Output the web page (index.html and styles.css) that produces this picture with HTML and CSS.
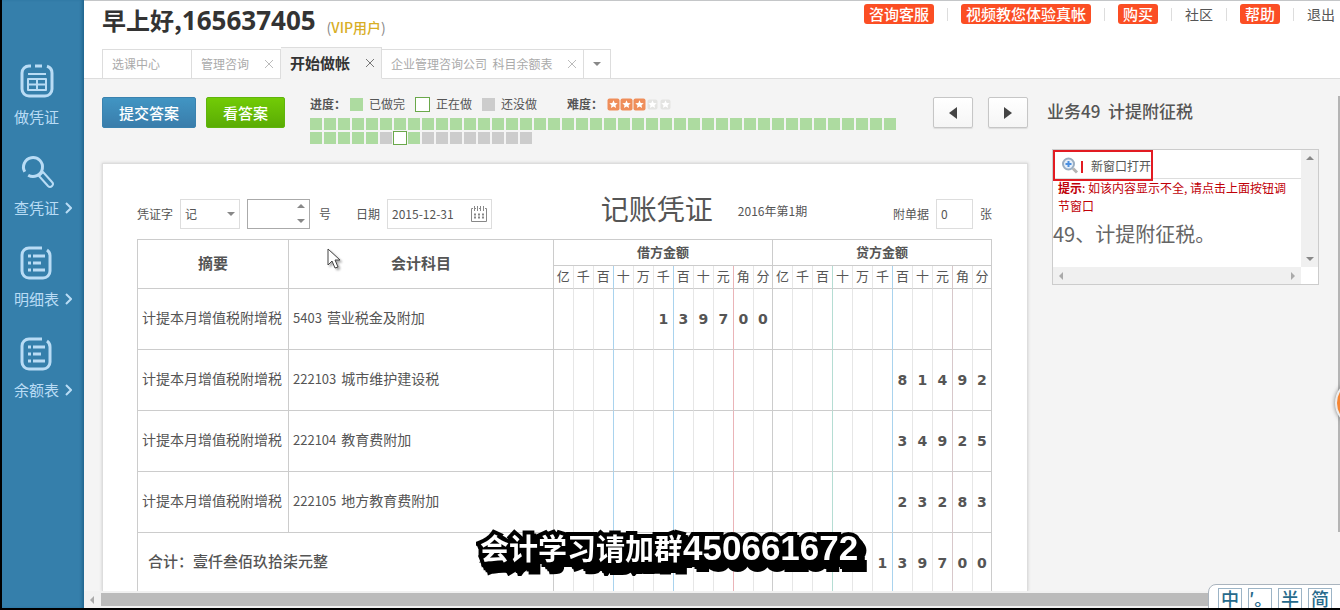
FILE: index.html
```html
<!DOCTYPE html>
<html lang="zh-CN">
<head>
<meta charset="utf-8">
<title>开始做帐</title>
<link rel="stylesheet" href="styles.css">
</head>
<body>
<div class="screen">
  <nav class="sidebar">
    <a class="side-item" href="#">
      <svg class="side-icon" viewBox="0 0 34 34"><path d="M11 2H9a7 7 0 0 0-7 7v16a7 7 0 0 0 7 7h16a7 7 0 0 0 7-7V9a7 7 0 0 0-5-6.700M15 2h7"/><path class="thin" d="M8 10h18M8 15h18v11H8zM8 20.500h18M17 15v11"/></svg>
      <span class="side-label">做凭证</span>
    </a>
    <a class="side-item" href="#">
      <svg class="side-icon" viewBox="0 0 34 34"><path d="M4.800 16.800A9.500 9.500 0 1 1 8.200 20.200"/><path class="thin" d="M19 21l4-4 9 10a2.800 2.800 0 0 1-4 4z"/></svg>
      <span class="side-label">查凭证<svg class="chevron" viewBox="0 0 7 12"><path d="M1 1l5 5-5 5"/></svg></span>
    </a>
    <a class="side-item" href="#">
      <svg class="side-icon" viewBox="0 0 34 34"><path d="M22 2H9a7 7 0 0 0-7 7v16a7 7 0 0 0 7 7h14a7 7 0 0 0 7-7V10a7 7 0 0 0-3-6"/><path d="M8 10h3M8 17h3M8 24h3M13 10h12M13 17h8M13 24h12"/></svg>
      <span class="side-label">明细表<svg class="chevron" viewBox="0 0 7 12"><path d="M1 1l5 5-5 5"/></svg></span>
    </a>
    <a class="side-item" href="#">
      <svg class="side-icon" viewBox="0 0 34 34"><path d="M22 2H9a7 7 0 0 0-7 7v16a7 7 0 0 0 7 7h14a7 7 0 0 0 7-7V10a7 7 0 0 0-3-6"/><path d="M8 10h3M8 17h3M8 24h3M13 10h12M13 17h8M13 24h12"/></svg>
      <span class="side-label">余额表<svg class="chevron" viewBox="0 0 7 12"><path d="M1 1l5 5-5 5"/></svg></span>
    </a>
  </nav>

  <div class="main">
    <header class="header">
      <div class="header-top">
        <h1 class="greeting">早上好,<span class="greeting-id">165637405</span></h1>
        <span class="vip">(<b>VIP用户</b>)</span>
        <div class="top-links">
          <a class="pill" href="#">咨询客服</a><i class="sep"></i>
          <a class="pill" href="#">视频教您体验真帐</a><i class="sep"></i>
          <a class="pill" href="#">购买</a><i class="sep"></i>
          <a class="plain" href="#">社区</a><i class="sep"></i>
          <a class="pill" href="#">帮助</a><i class="sep"></i>
          <a class="plain" href="#">退出</a>
        </div>
      </div>
      <div class="tabs">
        <a class="tab tab-first" href="#">选课中心</a>
        <a class="tab" href="#">管理咨询<svg class="close" viewBox="0 0 8 8"><path d="M0 0l8 8M8 0L0 8"/></svg></a>
        <a class="tab tab-active" href="#">开始做帐<svg class="close" viewBox="0 0 8 8"><path d="M0 0l8 8M8 0L0 8"/></svg></a>
        <a class="tab" href="#">企业管理咨询公司&nbsp; 科目余额表<svg class="close" viewBox="0 0 8 8"><path d="M0 0l8 8M8 0L0 8"/></svg></a>
        <button class="tab tab-more" aria-label="更多"><i class="tri tri-down"></i></button>
      </div>
    </header>

    <div class="workspace">
      <section class="work">
        <div class="toolbar">
          <button class="btn btn-blue">提交答案</button>
          <button class="btn btn-green">看答案</button>
          <div class="progress">
            <div class="legend">
              <b>进度：</b>
              <i class="sq done"></i><span class="legend-text">已做完</span>
              <i class="sq now"></i><span class="legend-text">正在做</span>
              <i class="sq todo"></i><span class="legend-text">还没做</span>
              <b class="level">难度：</b>
              <span class="stars">
                <svg class="star on" viewBox="0 0 13 13"><rect x="0.500" y="0.500" width="12" height="12" rx="2"/><path d="M6.500 2.200l1.200 2.700 3 .3-2.200 2 .6 2.900-2.600-1.500-2.600 1.500.6-2.900-2.200-2 3-.3z"/></svg>
                <svg class="star on" viewBox="0 0 13 13"><rect x="0.500" y="0.500" width="12" height="12" rx="2"/><path d="M6.500 2.200l1.200 2.700 3 .3-2.200 2 .6 2.900-2.600-1.500-2.600 1.500.6-2.900-2.200-2 3-.3z"/></svg>
                <svg class="star on" viewBox="0 0 13 13"><rect x="0.500" y="0.500" width="12" height="12" rx="2"/><path d="M6.500 2.200l1.200 2.700 3 .3-2.200 2 .6 2.900-2.600-1.500-2.600 1.500.6-2.900-2.200-2 3-.3z"/></svg>
                <svg class="star" viewBox="0 0 13 13"><rect x="1.500" y="1.500" width="10" height="10" rx="2"/><path d="M6.500 2.200l1.200 2.700 3 .3-2.200 2 .6 2.900-2.600-1.500-2.600 1.500.6-2.900-2.200-2 3-.3z"/></svg>
                <svg class="star" viewBox="0 0 13 13"><rect x="1.500" y="1.500" width="10" height="10" rx="2"/><path d="M6.500 2.200l1.200 2.700 3 .3-2.200 2 .6 2.900-2.600-1.500-2.600 1.500.6-2.900-2.200-2 3-.3z"/></svg>
              </span>
            </div>
            <div class="cells">
              <i class="done"></i><i class="done"></i><i class="done"></i><i class="done"></i><i class="done"></i><i class="done"></i><i class="done"></i><i class="done"></i><i class="done"></i><i class="done"></i><i class="done"></i><i class="done"></i><i class="done"></i><i class="done"></i><i class="done"></i><i class="done"></i><i class="done"></i><i class="done"></i><i class="done"></i><i class="done"></i><i class="done"></i><i class="done"></i><i class="done"></i><i class="done"></i><i class="done"></i><i class="done"></i><i class="done"></i><i class="done"></i><i class="done"></i><i class="done"></i><i class="done"></i><i class="done"></i><i class="done"></i><i class="done"></i><i class="done"></i><i class="done"></i><i class="done"></i><i class="done"></i><i class="done"></i><i class="done"></i><i class="done"></i><i class="done"></i>
              <i class="done"></i><i class="done"></i><i class="done"></i><i class="done"></i><i class="done"></i><i class="todo"></i><i class="now"></i><i class="done"></i><i class="todo"></i><i class="todo"></i><i class="todo"></i><i class="todo"></i><i class="todo"></i><i class="todo"></i><i class="todo"></i><i class="todo"></i>
            </div>
          </div>
          <div class="pager">
            <button class="page-btn" aria-label="上一题"><svg viewBox="0 0 8 12"><path d="M8 0v12L0 6z"/></svg></button>
            <button class="page-btn" aria-label="下一题"><svg viewBox="0 0 8 12"><path d="M0 0v12l8-6z"/></svg></button>
          </div>
        </div>

        <div class="sheet">
          <div class="form-row">
            <label for="word">凭证字</label>
            <span class="field word"><select id="word"><option>记</option></select><i class="tri tri-down"></i></span>
            <span class="field number"><input id="number" type="text"><span class="spin"><button class="tri tri-up" aria-label="增加"></button><button class="tri tri-down" aria-label="减少"></button></span></span>
            <label for="number">号</label>
            <label class="date-label" for="date">日期</label>
            <span class="field date"><input id="date" type="text" value="2015-12-31"><svg class="calendar" viewBox="0 0 16 16"><path d="M4 2.500h1M8 2.500h1M12 2.500h1M2 2.500H.5v13h15v-13H14M3.500 0v5M6.500 0v5M9.500 0v5M12.500 0v5"/><path class="dots" d="M3 8.500h10M3 11.500h10"/></svg></span>
            <div class="title-group"><h2 class="doc-title">记账凭证</h2><span class="period">2016年第1期</span></div>
            <label for="attach">附单据</label>
            <span class="field attach"><input id="attach" type="text" value="0"></span>
            <span>张</span>
          </div>

          <table class="voucher">
            <colgroup>
              <col class="c-sum"><col>
              <col class="c" span="10"><col class="c-end">
              <col class="c" span="10"><col class="c-end">
            </colgroup>
            <thead>
              <tr class="h1"><th rowspan="2" class="big">摘要</th><th rowspan="2" class="big">会计科目</th><th colspan="11">借方金额</th><th colspan="11">贷方金额</th></tr>
              <tr class="h2"><td>亿</td><td>千</td><td>百</td><td>十</td><td>万</td><td>千</td><td>百</td><td>十</td><td>元</td><td>角</td><td>分</td><td>亿</td><td>千</td><td>百</td><td>十</td><td>万</td><td>千</td><td>百</td><td>十</td><td>元</td><td>角</td><td>分</td></tr>
            </thead>
            <tbody>
              <tr><th class="text">计提本月增值税附增税</th><th class="text"><span class="code">5403</span>营业税金及附加</th><td></td><td></td><td></td><td></td><td></td><td>1</td><td>3</td><td>9</td><td>7</td><td>0</td><td>0</td><td></td><td></td><td></td><td></td><td></td><td></td><td></td><td></td><td></td><td></td><td></td></tr>
              <tr><th class="text">计提本月增值税附增税</th><th class="text"><span class="code">222103</span>城市维护建设税</th><td></td><td></td><td></td><td></td><td></td><td></td><td></td><td></td><td></td><td></td><td></td><td></td><td></td><td></td><td></td><td></td><td></td><td>8</td><td>1</td><td>4</td><td>9</td><td>2</td></tr>
              <tr><th class="text">计提本月增值税附增税</th><th class="text"><span class="code">222104</span>教育费附加</th><td></td><td></td><td></td><td></td><td></td><td></td><td></td><td></td><td></td><td></td><td></td><td></td><td></td><td></td><td></td><td></td><td></td><td>3</td><td>4</td><td>9</td><td>2</td><td>5</td></tr>
              <tr><th class="text">计提本月增值税附增税</th><th class="text"><span class="code">222105</span>地方教育费附加</th><td></td><td></td><td></td><td></td><td></td><td></td><td></td><td></td><td></td><td></td><td></td><td></td><td></td><td></td><td></td><td></td><td></td><td>2</td><td>3</td><td>2</td><td>8</td><td>3</td></tr>
              <tr><th class="total" colspan="2">合计：壹仟叁佰玖拾柒元整</th><td></td><td></td><td></td><td></td><td></td><td></td><td></td><td></td><td></td><td></td><td></td><td></td><td></td><td></td><td></td><td></td><td>1</td><td>3</td><td>9</td><td>7</td><td>0</td><td>0</td></tr>
            </tbody>
          </table>
        </div>
      </section>

      <aside class="task">
        <h3 class="task-title">业务49&nbsp; 计提附征税</h3>
        <div class="task-box">
          <div class="task-body">
            <div class="task-bar"><a class="open-link" href="#"><svg class="zoom-icon" viewBox="0 0 18 18"><circle cx="7.500" cy="7" r="5.500"/><path class="plus" d="M7.500 4v6M4.500 7h6"/><path class="handle" d="M12 11.500l4 4"/></svg><i class="mark"></i>新窗口打开</a></div>
            <p class="hint"><b>提示</b>: 如该内容显示不全, 请点击上面按钮调节窗口</p>
            <p class="question">49、计提附征税。</p>
          </div>
          <div class="bar-v"><i class="tri tri-up"></i><i class="tri tri-down"></i></div>
          <div class="bar-h"><i class="tri tri-left"></i><i class="tri tri-right"></i></div>
        </div>
      </aside>
    </div>

    <div class="page-scroll"><i class="tri tri-left"></i><div class="thumb"></div></div>
  </div>

  <i class="side-thumb"></i>
  <i class="bubble"></i>
  <svg class="cursor" viewBox="0 0 14 22"><path d="M1 1v16l4-4 3 7 3-1-3-7h5z"/></svg>
  <div class="caption">会计学习请加群<span class="caption-num">450661672</span></div>
  <div class="ime"><button>中</button><button>′。</button><button>半</button><button>简</button></div>
</div>
</body>
</html>
```
FILE: styles.css
```css
* { box-sizing: border-box; }

body {
  margin: 0;
  font: 12px/18px "Noto Sans CJK SC", sans-serif;
  color: #555;
}

h1, h2, h3, p { margin: 0; font-weight: 400; }
a { color: inherit; text-decoration: none; }
i { font-style: normal; }
button, input, select { font: inherit; color: inherit; margin: 0; padding: 0; border: 0; background: none; }
svg { display: block; flex: none; }

.screen {
  position: relative;
  display: flex;
  height: 100vh;
  overflow: hidden;
  border-left: 2px solid #000;
  border-bottom: 2px solid #000;
  background: #f4f4f4;
}

/* Triangles shared by selects, spinners and scrollbars */
.tri { display: block; width: 0; height: 0; border: 4px solid transparent; flex: none; }
.tri-down { border-top-color: #888; border-bottom: 0; }
.tri-up { border-bottom-color: #888; border-top: 0; }
.tri-left { border-right-color: #aaa; border-left: 0; }
.tri-right { border-left-color: #aaa; border-right: 0; }

/* Sidebar */
.sidebar {
  flex: none;
  width: 82px;
  padding: 64px 0 0 12px;
  display: flex;
  flex-direction: column;
  gap: 28px;
  background: #357fab;
  box-shadow: inset -3px 0 3px -1px #22668f;
}
.side-item { display: flex; flex-direction: column; gap: 9px; color: #b9dcf5; }
.side-icon { width: 34px; height: 34px; margin-left: 6px; }
.side-icon path { fill: none; stroke: #b9dcf5; stroke-width: 3; stroke-linejoin: round; }
.side-icon .thin { stroke-width: 2; }
.side-label { display: flex; align-items: center; gap: 6px; font-size: 15px; line-height: 20px; }
.chevron { width: 7px; height: 12px; }
.chevron path { fill: none; stroke: #b9dcf5; stroke-width: 2; }

/* Header */
.main { flex: 1; min-width: 0; display: flex; flex-direction: column; }
.header {
  flex: none;
  height: 79px;
  display: flex;
  flex-direction: column;
  justify-content: space-between;
  background: #fff;
  border-top: 1px solid #c4c6c8;
  border-bottom: 1px solid #ddd;
}
.header-top { display: flex; padding: 0 5px 0 18px; }
.greeting { font-size: 24px; line-height: 38px; font-weight: 700; color: #333; }
.greeting-id { font: 700 26px/38px "Open Sans", sans-serif; }
.vip { margin: 16px 0 0 11px; font-size: 14px; line-height: 20px; color: #888; }
.vip b { color: #d8ae26; font-weight: 500; }
.top-links { margin-left: auto; display: flex; align-items: center; height: 20px; margin-top: 3px; gap: 13px; font-size: 14px; }
.pill { background: #fb4e24; color: #fff; font-size: 15px; line-height: 20px; font-weight: 500; padding: 0 5px; border-radius: 3px; }
.plain { line-height: 20px; }
.sep { width: 1px; height: 13px; background: #ddd; }

.tabs { display: flex; align-items: flex-end; padding-left: 18px; margin-bottom: -1px; }
.tab {
  height: 30px;
  display: flex;
  align-items: center;
  justify-content: space-between;
  gap: 16px;
  padding: 0 7px 0 9px;
  border: 1px solid #ddd;
  border-left: 0;
  color: #aaa;
}
.tab-first { width: 90px; border-left: 1px solid #ddd; }
.tab-active { height: 32px; background: #f4f4f4; border-bottom-color: #f4f4f4; font-size: 15px; font-weight: 700; color: #333; }
.tab-more { width: 27px; justify-content: center; padding: 0; }
.close { width: 8px; height: 8px; }
.close path { stroke: #bbb; stroke-width: 1; }
.tab-active .close path { stroke: #777; }

/* Workspace */
.workspace { flex: 1; min-height: 0; display: flex; overflow: hidden; }
.work { flex: 1; min-width: 0; padding: 18px 0 0 18px; display: flex; flex-direction: column; }
.toolbar { flex: none; display: flex; align-items: flex-start; height: 66px; gap: 10px; }
.btn { flex: none; height: 31px; border-radius: 2px; color: #fff; font-size: 15px; font-weight: 500; padding: 0 16px; }
.btn-blue { background: linear-gradient(#4195c3, #3a7dab); border: 1px solid #3a82af; }
.btn-green { background: linear-gradient(#72cb06, #5aac04); border: 1px solid #5fb50c; }
.progress { flex: 1; min-width: 0; padding-left: 15px; }
.legend { display: flex; align-items: center; height: 14px; }
.legend b { width: 40px; }
.legend-text { margin: 0 10px 0 6px; }
.legend .level { margin-left: 20px; }
.sq { width: 13px; height: 13px; }
.done { background: #addba0; }
.todo { background: #ccc; }
.now { background: #fff; border: 1px solid #6aa84a; }
.sq.now { width: 15px; height: 15px; }
.stars { display: flex; }
.star { width: 13px; height: 13px; }
.star rect { fill: #e4e4e2; }
.star path { fill: #fff; }
.star.on rect { fill: #ef8e5a; }
.cells { display: grid; grid-template-columns: repeat(42, 12px); grid-auto-rows: 12px; gap: 2px; margin-top: 7px; }
.cells .now { margin: -1px; }
.pager { flex: none; display: flex; gap: 15px; }
.page-btn { width: 40px; height: 31px; display: grid; place-items: center; border: 1px solid #c6c6c6; border-radius: 2px; background: linear-gradient(#fff, #f5f5f5); box-shadow: 0 1px 1px #ddd; }
.page-btn svg { width: 8px; height: 12px; fill: #444; }

/* Voucher sheet */
.sheet { flex: 1; min-height: 0; padding: 20px 35px 0 34px; background: #fff; border: 1px solid #ddd; border-bottom: 0; box-shadow: 0 0 3px #ccc; }
.form-row { display: flex; align-items: center; height: 55px; padding-top: 4px; gap: 7px; }
.field { position: relative; display: flex; align-items: center; justify-content: space-between; height: 30px; padding: 0 4px; border: 1px solid #ddd; }
.field input, .field select { min-width: 0; width: 100%; height: 28px; outline: 0; appearance: none; }
.word { width: 60px; }
.number { width: 63px; border-color: #aaa; margin-right: 2px; }
.spin { display: flex; flex-direction: column; gap: 11px; }
.date-label { margin-left: 18px; }
.date { width: 105px; }
.calendar { width: 16px; height: 16px; }
.calendar path { fill: none; stroke: #888; }
.calendar .dots { stroke-dasharray: 2 2; stroke-width: 2; }
.title-group { margin: 0 auto; padding: 0 0 12px 23px; display: flex; align-items: center; gap: 25px; }
.doc-title { font-size: 28px; line-height: 32px; color: #555; }
.period { padding-top: 7px; }
.attach { width: 37px; }

.voucher { width: 100%; table-layout: fixed; border-collapse: separate; border-spacing: 0; border: 1px solid #ccc; border-width: 1px 0 0 1px; }
.c-sum { width: 151px; }
.c { width: 20px; }
.c-end { width: 19px; }
.voucher tr { height: 61px; }
.voucher .h1 { height: 26px; }
.voucher .h2 { height: 23px; }
.voucher th, .voucher td { padding: 0; border: 0 solid #ccc; border-width: 0 1px 1px 0; text-align: center; white-space: nowrap; }
.voucher td { border-right-color: #e6e6e6; font: 700 14px/18px "DejaVu Sans", sans-serif; }
.voucher td:nth-last-child(20), .voucher td:nth-last-child(17), .voucher td:nth-last-child(6) { border-right-color: #a9d3ee; }
.voucher td:nth-last-child(14) { border-right-color: #eab4b8; }
.voucher td:nth-last-child(9) { border-right-color: #b5ddd3; }
.voucher td:nth-last-child(3) { border-right-color: #d8c8ca; }
.voucher td:nth-last-child(12), .voucher td:last-child { border-right-color: #ccc; }
.voucher .h1 th { font-size: 13px; line-height: 18px; padding-bottom: 2px; }
.voucher .h2 td { font: 13px/18px "Noto Sans CJK SC", sans-serif; padding-bottom: 2px; }
.voucher .h1 .big { font-size: 15px; }
.voucher .text { text-align: left; font-size: 14px; font-weight: 400; padding: 0 0 4px 4px; }
.code { font-size: 13px; margin-right: 5px; }
.voucher .total { text-align: left; font-size: 15px; font-weight: 500; padding: 0 0 4px 10px; }

/* Task panel */
.task { flex: none; width: 312px; padding: 20px 21px 0 19px; }
.task-title { font-size: 17px; line-height: 24px; font-weight: 500; }
.task-box { display: grid; grid-template-columns: 1fr 17px; grid-template-rows: auto 17px; margin: 26px 0 0 5px; border: 1px solid #ccc; background: #fff; }
.task-body { height: 117px; overflow: hidden; }
.task-bar { height: 29px; border-bottom: 1px solid #ddd; }
.open-link { display: inline-flex; align-items: center; height: 31px; padding-left: 6px; border: 2px solid #e21b22; }
.zoom-icon { width: 18px; height: 18px; }
.zoom-icon circle { fill: #e5effa; stroke: #9aaec2; stroke-width: 2; }
.zoom-icon .plus { stroke: #4b8fe0; stroke-width: 2; }
.zoom-icon .handle { stroke: #b4b4b4; stroke-width: 3; }
.mark { width: 2px; height: 12px; margin: 2px 8px 0 2px; background: #e21b22; }
.hint { position: relative; padding: 0 8px 0 5px; color: #c00008; }
.question { font-size: 20px; line-height: 38px; color: #666; }
.bar-v, .bar-h { display: flex; justify-content: space-between; align-items: center; background: #f0f0f0; }
.bar-v { flex-direction: column; padding: 6px 0; }
.bar-h { padding: 0 6px; }

/* Page scrollbars and overlays */
.page-scroll { flex: none; height: 17px; display: flex; align-items: center; gap: 7px; padding-left: 6px; background: #f1f1f1; }
.thumb { flex: 1; height: 13px; background: #bbb; }
.side-thumb { position: absolute; right: 0; top: 96px; width: 2px; height: 436px; background: #b4b4b4; }
.bubble { position: absolute; right: -43px; top: 379px; width: 48px; height: 48px; border-radius: 50%; border: 2px solid #eee; background: #f58634; box-shadow: 0 0 4px #777; }
.cursor { position: absolute; left: 325px; top: 248px; width: 14px; height: 22px; filter: drop-shadow(2px 2px 1px #aaa); }
.cursor path { fill: #fff; stroke: #444; stroke-width: 1; }
.caption {
  position: absolute;
  left: 478px;
  top: 525px;
  color: #fff;
  font-size: 29px;
  line-height: 44px;
  font-weight: 700;
  white-space: nowrap;
  -webkit-text-stroke: 8px #000;
  paint-order: stroke fill;
  stroke-linejoin: round;
  filter: drop-shadow(2px 3px 0 #000) drop-shadow(4px 5px 0 #000);
}
.caption-num { font-family: "Liberation Sans", sans-serif; font-size: 35px; }
.ime { position: absolute; right: -12px; bottom: -10px; display: flex; gap: 6px; padding: 3px 19px 5px 9px; background: #fff; border: 1px solid #aab4be; border-radius: 8px; }
.ime button { width: 24px; height: 24px; padding-bottom: 4px; border: 1px solid #9cb4c6; color: #276a8c; font-size: 18px; line-height: 18px; font-weight: 500; white-space: nowrap; }
```
